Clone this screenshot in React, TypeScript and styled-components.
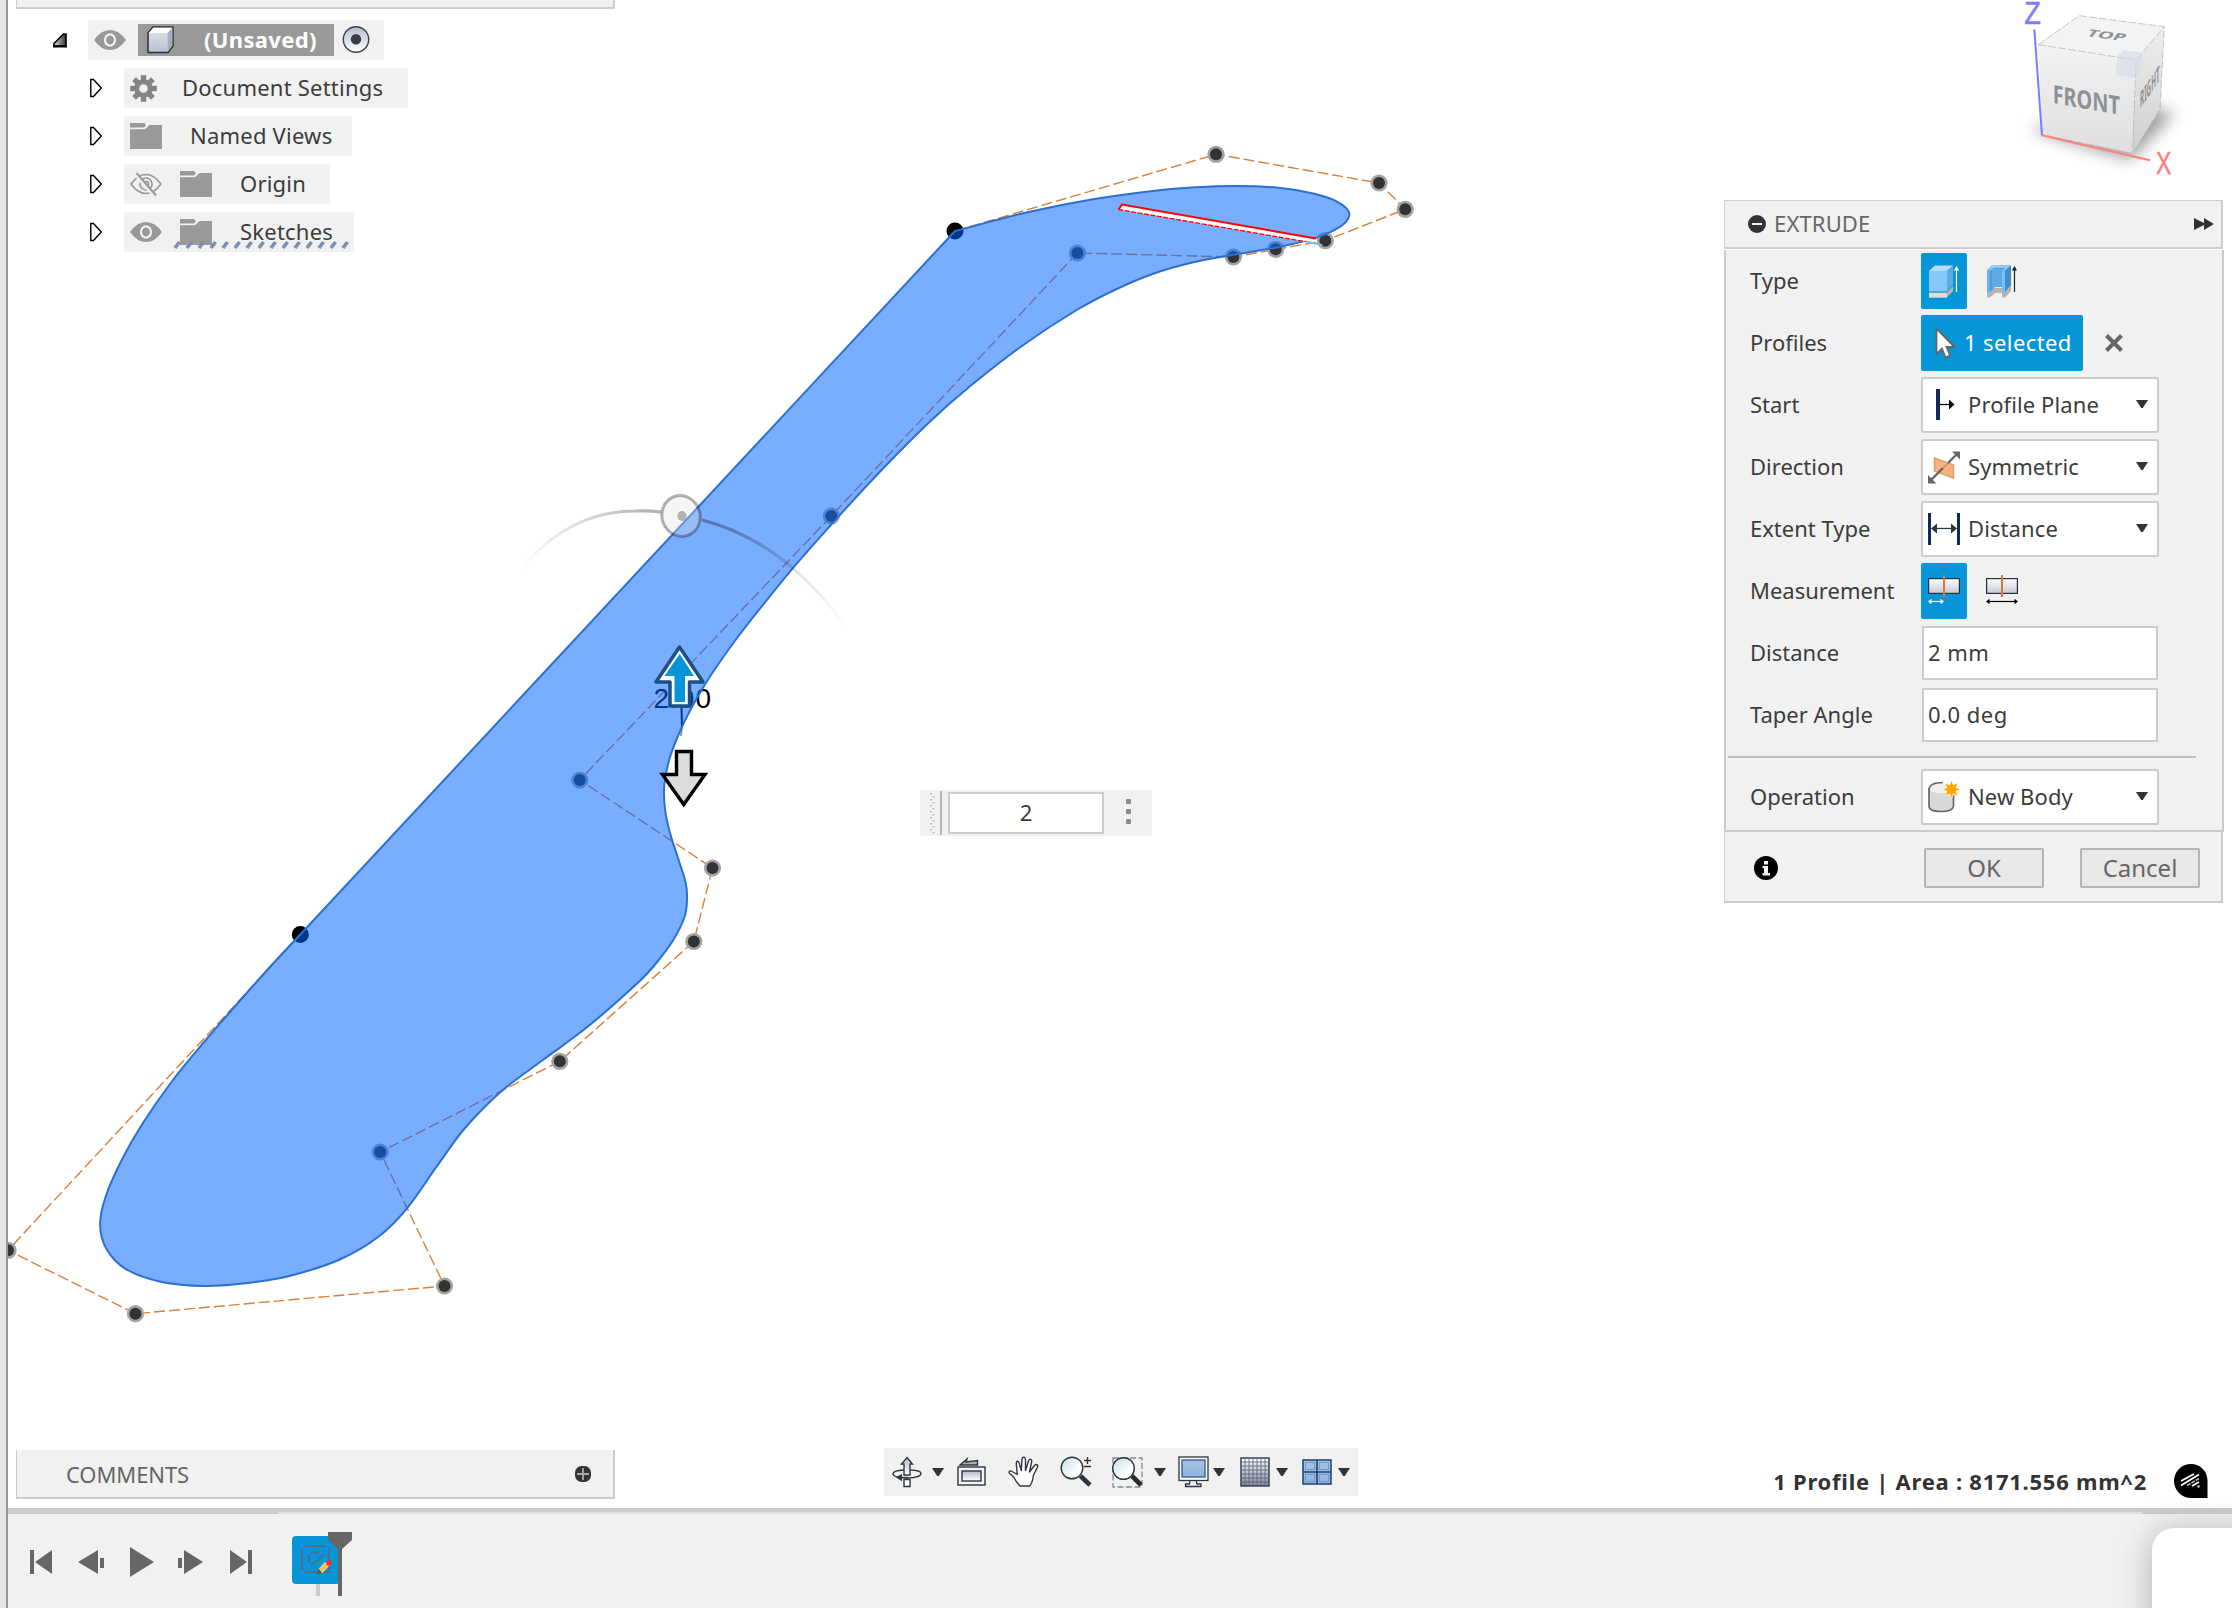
import React from 'react';
import styled, { createGlobalStyle } from 'styled-components';

const Global = createGlobalStyle`
  * { box-sizing: border-box; }
  body { margin: 0; background: #fff; font-family: "Noto Sans", "Open Sans", sans-serif; font-size: 22px; color: #3c3c3c; overflow: hidden; }
  svg { display: block; flex: none; }
`;

/* ---------- Shell ---------- */
const Shell = styled.div`
  display: flex;
  position: relative;
  width: 2232px;
  height: 1608px;
  overflow: hidden;
`;
const Gutter = styled.div`
  width: 8px;
  background: #e5e5e5;
  border-right: 2px solid #999;
`;
const Main = styled.div`
  flex: 1;
  display: flex;
  flex-direction: column;
  min-width: 0;
`;
const Viewport = styled.section`
  position: relative;
  height: 1508px;
  overflow: hidden;
  display: flex;
  flex-direction: column;
  justify-content: space-between;
`;
const Scene = styled.svg`
  position: absolute;
  left: -8px;
  top: 0;
`;
const Row = styled.div`
  position: relative;
  display: flex;
  justify-content: space-between;
  align-items: flex-start;
`;

/* ---------- Browser tree ---------- */
const Browser = styled.div`
  margin-left: 8px;
  width: 599px;
`;
const BrowserStrip = styled.div`
  height: 9px;
  background: #f1f1f1;
  border: solid #ccc;
  border-width: 0 2px 2px 1px;
`;
const Tree = styled.div`
  display: flex;
  flex-direction: column;
  gap: 8px;
  padding-top: 11px;
`;
const TreeRow = styled.div<{ $root?: boolean }>`
  display: flex;
  align-items: center;
  height: 40px;
  padding-left: ${p => (p.$root ? 37 : 74)}px;
  gap: ${p => (p.$root ? 21 : 22)}px;
`;
const TreeItem = styled.div<{ $w: number }>`
  position: relative;
  width: ${p => p.$w}px;
  height: 40px;
  display: flex;
  align-items: center;
  background: #f1f1f1;
  padding-left: 6px;
`;
const TreeName = styled.span<{ $gap: number }>`
  margin-left: ${p => p.$gap}px;
  padding-bottom: 2px;
  letter-spacing: 0.22px;
  white-space: nowrap;
`;
const RootLabel = styled.div`
  display: flex;
  align-items: center;
  width: 196px;
  height: 32px;
  margin: 0 8px 0 12px;
  padding-left: 9px;
  gap: 30px;
  background: #999;
  color: #fff;
  font-weight: 700;
`;
const RootName = styled.span`
  padding-bottom: 2px;
  letter-spacing: 0.35px;
`;
const Hatch = styled.svg`
  position: absolute;
  left: 49px;
  top: 28px;
`;
const Spaced = styled.span<{ $l: number; $t?: number }>`
  display: flex;
  margin-left: ${p => p.$l}px;
  padding-top: ${p => p.$t ?? 0}px;
`;

/* ---------- Right side ---------- */
const RightColumn = styled.div`
  display: flex;
  flex-direction: column;
  align-items: flex-end;
  margin-right: 8px;
`;
const CubeSlot = styled.div`
  height: 200px;
  margin-right: -8px;
`;
const Dialog = styled.div`
  width: 500px;
`;
const DialogHeader = styled.div`
  display: flex;
  align-items: center;
  width: 499px;
  height: 49px;
  margin-bottom: 1px;
  padding: 0 7px 0 23px;
  background: #f1f1f1;
  border: solid #ccc;
  border-width: 1px 2px 2px 1px;
  color: #666;
`;
const DialogTitle = styled.span`
  flex: 1;
  margin-left: 8px;
  padding-bottom: 2px;
  letter-spacing: 0.15px;
`;
const DialogBody = styled.div`
  height: 582px;
  padding-top: 3px;
  background: #f1f1f1;
  border: 2px solid #ccc;
  border-top: 0;
  display: flex;
  flex-direction: column;
  gap: 6px;
`;
const Field = styled.div`
  display: flex;
  align-items: center;
  height: 56px;
  padding-left: 24px;
`;
const FieldLabel = styled.label`
  width: 171px;
  padding-bottom: 2px;
`;
const IconToggle = styled.button<{ $on?: boolean }>`
  width: 46px;
  height: 56px;
  margin-right: 12px;
  padding: 0;
  border: 0;
  border-radius: 2px;
  display: flex;
  align-items: center;
  justify-content: center;
  background: ${p => (p.$on ? '#0696d7' : 'transparent')};
`;
const Selected = styled.button`
  display: flex;
  align-items: center;
  width: 162px;
  height: 56px;
  margin-right: 22px;
  padding: 0 0 0 14px;
  gap: 8px;
  border: 0;
  border-radius: 2px;
  background: #0696d7;
  color: #fff;
  font: inherit;
  letter-spacing: 0.4px;
  white-space: nowrap;
`;
const SelectedText = styled.span`
  padding-bottom: 2px;
`;
const Select = styled.div`
  display: flex;
  align-items: center;
  width: 238px;
  height: 56px;
  padding: 0 9px 0 5px;
  background: #fff;
  border: 2px solid #ccc;
  border-radius: 2px;
`;
const SelectText = styled.span`
  flex: 1;
  margin-left: 8px;
  padding-bottom: 2px;
  letter-spacing: 0.1px;
  white-space: nowrap;
`;
const TextField = styled.div`
  display: flex;
  align-items: center;
  width: 236px;
  height: 54px;
  margin-left: 1px;
  padding: 0 0 2px 4px;
  background: #fff;
  border: 2px solid #ccc;
  letter-spacing: 0.5px;
`;
const Divider = styled.hr`
  width: 468px;
  height: 2px;
  margin: 7px 0 5px 2px;
  border: 0;
  background: #bfbfbf;
`;
const DialogFooter = styled.div`
  display: flex;
  align-items: center;
  width: 499px;
  height: 71px;
  padding: 2px 21px 0 29px;
  background: #f1f1f1;
  border: solid #ccc;
  border-width: 0 2px 2px 1px;
`;
const PushButton = styled.button<{ $l: number }>`
  width: 120px;
  height: 40px;
  margin-left: ${p => p.$l}px;
  padding: 0;
  background: #e8e8e8;
  border: 2px solid #b5b5b5;
  border-radius: 2px;
  color: #666;
  font: inherit;
  font-size: 24px;
  line-height: 34px;
`;

/* ---------- Bottom row ---------- */
const BottomRow = styled.div`
  position: relative;
  display: flex;
  align-items: flex-start;
  height: 60px;
  padding-left: 8px;
`;
const Comments = styled.div`
  display: flex;
  align-items: center;
  justify-content: space-between;
  width: 599px;
  height: 49px;
  margin-top: 2px;
  padding: 0 22px 0 49px;
  background: #f1f1f1;
  border: solid #ccc;
  border-width: 0 2px 2px 1px;
  color: #666;
  letter-spacing: -0.1px;
`;
const NavBar = styled.nav`
  display: flex;
  align-items: center;
  width: 474px;
  height: 48px;
  margin-left: 269px;
  padding-left: 6px;
  background: #f1f1f1;
`;
const Status = styled.div`
  flex: 1;
  display: flex;
  align-items: center;
  justify-content: flex-end;
  gap: 27px;
  height: 66px;
  padding-right: 24px;
  color: #333;
  font-weight: 700;
  letter-spacing: 0.74px;
  white-space: nowrap;
`;

/* ---------- Timeline ---------- */
const SplitBar = styled.div`
  height: 6px;
  display: flex;
  align-items: flex-end;
  padding-left: 270px;
  background: #cbcbcb;
`;
const SplitGroove = styled.div`
  width: 1864px;
  height: 2px;
  background: #dfdfdf;
`;
const Timeline = styled.footer`
  display: flex;
  align-items: center;
  flex: 1;
  padding-top: 2px;
  padding-left: 22px;
  background: #f1f1f1;
`;
const PopupCorner = styled.div`
  position: absolute;
  left: 2152px;
  top: 1528px;
  width: 120px;
  height: 120px;
  border-radius: 22px;
  background: #fff;
  box-shadow: 0 4px 34px rgba(0, 0, 0, 0.28);
`;
const MiniInput = styled.div`
  position: absolute;
  left: 912px;
  top: 790px;
  display: flex;
  align-items: center;
  width: 232px;
  height: 46px;
  padding-left: 9px;
  background: #f1f1f1;
`;
const MiniField = styled.div`
  width: 156px;
  height: 42px;
  margin: 0 22px 0 6px;
  display: flex;
  align-items: center;
  justify-content: center;
  padding-bottom: 2px;
  background: #fff;
  border: 2px solid #ccc;
`;
const MoreDots = styled.div`
  display: flex;
  flex-direction: column;
  gap: 5px;
  padding-bottom: 3px;
`;
const MoreDot = styled.i`
  width: 5px;
  height: 5px;
  border-radius: 1px;
  background: #8c8c8c;
`;

/* ---------- Tree icons ---------- */
const Eye = () => (
  <svg width="32" height="22" viewBox="0 0 32 22">
    <path d="M0 11Q7 1 16 1T32 11Q25 21 16 21T0 11Z" fill="#999" />
    <ellipse cx="16" cy="11" rx="5" ry="5.6" fill="none" stroke="#f1f1f1" strokeWidth="2.2" />
  </svg>
);
const EyeOff = () => (
  <svg width="32" height="24" viewBox="0 0 32 24" fill="none" stroke="#999" strokeWidth="1.7">
    <path d="M1 12Q8 2.5 16 2.5T31 12Q24 21.500 16 21.500T1 12Z" />
    <circle cx="16" cy="12" r="6" />
    <circle cx="16" cy="12" r="2.500" />
    <path d="M4.500 1.500L24 24" stroke="#f1f1f1" strokeWidth="3" />
    <path d="M6.500 1L26 23.500" strokeWidth="2" />
  </svg>
);
const Folder = () => (
  <svg width="32" height="26" viewBox="0 0 32 26" fill="#999">
    <path d="M0 0H13Q15.500 0 15.500 2.200Q15.500 4.500 13 4.500H0Z" />
    <path d="M0 6.200H15L19.500 2H32V26H0Z" />
  </svg>
);
const Gear = () => (
  <svg width="27" height="27" viewBox="-13.500 -13.500 27 27" fill="#858585">
    {[0, 45, 90, 135, 180, 225, 270, 315].map(a => (
      <rect key={a} x="-2.700" y="-13.300" width="5.400" height="7" transform={`rotate(${a})`} />
    ))}
    <circle r="6.800" fill="none" stroke="#858585" strokeWidth="5" />
  </svg>
);
const Expand = () => (
  <svg width="12" height="20" viewBox="0 0 12 20">
    <path d="M.8 1.500H3.500L11.300 10L3.500 18.500H.8Z" fill="#fff" stroke="#000" strokeWidth="1.400" />
  </svg>
);
const RootExpand = () => (
  <svg width="14" height="15" viewBox="0 0 14 15">
    <defs><linearGradient id="re" x1="0" x2="1"><stop offset="0" stopColor="#ddd" /><stop offset="1" stopColor="#333" /></linearGradient></defs>
    <path d="M13 1V13H1V10.500L10.500 1Z" fill="url(#re)" stroke="#000" strokeWidth="1.600" />
    <path d="M0 13.500H14" stroke="#000" strokeWidth="2" />
  </svg>
);
const BodyCube = () => (
  <svg width="27" height="28" viewBox="0 0 27 28">
    <defs><linearGradient id="bc" x1="0" x2="0" y1="0" y2="1"><stop offset="0" stopColor="#e2e6ee" /><stop offset="1" stopColor="#b9c0d0" /></linearGradient></defs>
    <path d="M1 7L6 1H26V20L21 26.500H1Z" fill="url(#bc)" stroke="#2c3038" strokeWidth="1.500" strokeLinejoin="round" />
    <path d="M1.800 7L6.300 1.800H25.300L20.500 7Z" fill="#fff" />
    <path d="M20.500 7L25.300 1.800V19.600L20.800 25.700Z" fill="#a6aebf" />
  </svg>
);
const Radio = () => (
  <svg width="28" height="28" viewBox="0 0 28 28">
    <defs><linearGradient id="rd" x1="0" x2="0" y1="0" y2="1"><stop offset="0" stopColor="#b3bccf" /><stop offset="1" stopColor="#fff" /></linearGradient></defs>
    <circle cx="14" cy="13.500" r="12.700" fill="url(#rd)" stroke="#3c3f46" strokeWidth="1.400" />
    <circle cx="14" cy="13.300" r="5.200" fill="#3a3c42" />
  </svg>
);

/* ---------- Dialog icons ---------- */
const Minus = () => (
  <svg width="18" height="18" viewBox="0 0 18 18"><circle cx="9" cy="9" r="9" fill="#333" /><path d="M4 9H14" stroke="#f1f1f1" strokeWidth="2" /></svg>
);
const Forward = () => (
  <svg width="20" height="12" viewBox="0 0 20 12" fill="#333"><path d="M0 0L10 5V0L20 6L10 12V7L0 12Z" /></svg>
);
const ExtrudeSolid = () => (
  <svg width="30" height="33" viewBox="0 0 30 33">
    <path d="M0 27.500H18L24 21V26L18 32.500H0Z" fill="#b5b5b5" /><path d="M0 28H18V32.500H0Z" fill="#dcdcdc" />
    <path d="M0 6H18V26.500H0Z" fill="#84c7fa" /><path d="M0 6L6 .5H24L18 6Z" fill="#b3deff" /><path d="M18 6L24 .5V20L18 26.500Z" fill="#5fa9e2" />
    <path d="M27.500 27V4" stroke="#fff" strokeWidth="1.200" /><path d="M24.800 5.500L27.500 1L30 5.500Z" fill="#fff" />
  </svg>
);
const ExtrudeThin = () => (
  <svg width="30" height="33" viewBox="0 0 30 33">
    <path d="M0 27L5 23H19L24 19V26L18 32.500H15V28H8L3 32.500H0Z" fill="#b4b4b4" />
    <path d="M0 5L5 .5H24L18 6H15V26.500H18L24 20V.5L18 6V26.500L15 27V22H8L3 27H0Z" fill="#4e9bd8" />
    <path d="M5 4H20L15 8V22H8L5 25Z" fill="#5eaae4" /><path d="M0 5H3V27H0Z" fill="#67b2ec" /><path d="M15 6H18V27H15Z" fill="#79bff5" />
    <path d="M18 6L24 .5V20L18 26.500Z" fill="#3f8dcb" /><path d="M0 5L5 1H23L18 5.500H15L18 3H7L3 5.500Z" fill="#8fcaf6" />
    <path d="M27.500 27V4" stroke="#222" strokeWidth="1.200" /><path d="M24.800 5.500L27.500 1L30 5.500Z" fill="#222" />
  </svg>
);
const Pointer = () => (
  <svg width="21" height="32" viewBox="0 0 21 32">
    <path d="M1.500 1.500V27L7 21.500L10.500 30.500L15 28.500L11.500 20H19.500Z" fill="#fff" stroke="#666" strokeWidth="1.800" />
  </svg>
);
const Clear = () => (
  <svg width="18" height="18" viewBox="0 0 18 18"><path d="M1.500 1.500L16.500 16.500M16.500 1.500L1.500 16.500" stroke="#666" strokeWidth="4" /></svg>
);
const Caret = ({ w = 12, h = 8 }: { w?: number; h?: number }) => (
  <svg width={w} height={h} viewBox="0 0 12 8"><path d="M0 0H12L6.800 8H5.200Z" fill="#333" /></svg>
);
const SelectCaret = styled.span`
  display: flex;
  padding-bottom: 2px;
`;
const StartPlane = () => (
  <svg width="32" height="32" viewBox="0 0 32 32"><path d="M10 0V31" stroke="#12295c" strokeWidth="4" /><path d="M12 15.500H22" stroke="#000" strokeWidth="1.200" /><path d="M21 10.500L26.500 15.500L21 20.500Z" fill="#000" /></svg>
);
const SymmetricIcon = () => (
  <svg width="32" height="33" viewBox="0 0 32 33">
    <path d="M6.500 7L25.500 14V27L6.500 20Z" fill="#f6b27f" stroke="#e29d6a" strokeWidth="1.600" />
    <path d="M3 29L15 17" stroke="#666" strokeWidth="2.400" /><path d="M15 17L20 12" stroke="#d49b78" strokeWidth="2.400" /><path d="M20 12L29 3" stroke="#666" strokeWidth="2.400" />
    <path d="M24 .5H32V8.500ZM0 24V32.500H8.500Z" fill="#666" />
  </svg>
);
const ExtentIcon = () => (
  <svg width="32" height="32" viewBox="0 0 32 32"><path d="M1.500 0V32M30.500 0V32" stroke="#12295c" strokeWidth="3" /><path d="M6 15.500H26" stroke="#2b3440" strokeWidth="1.300" /><path d="M3 15.500L9 10.500V20.500ZM29 15.500L23 10.500V20.500Z" fill="#2b3440" /></svg>
);
const MeasureIcon = ({ whole }: { whole?: boolean }) => {
  const c = whole ? '#000' : '#fff';
  const e = whole ? 32 : 16;
  return (
    <svg width="32" height="32" viewBox="0 0 32 32">
      <defs><linearGradient id="mg" x1="0" x2="0" y1="0" y2="1"><stop offset="0" stopColor="#fff" /><stop offset="1" stopColor="#c5c9d2" /></linearGradient></defs>
      <rect x=".6" y="3.600" width="30.800" height="14.800" fill="url(#mg)" stroke="#2b3040" strokeWidth="1.200" />
      <path d="M16 0V22" stroke="#e2733a" strokeWidth="2" />
      <path d={`M2 26.500H${e - 2}`} stroke={c} strokeWidth="1.200" />
      <path d={`M0 26.500L3.500 23.800V29.200ZM${e} 26.500L${e - 3.5} 23.800V29.200Z`} fill={c} />
    </svg>
  );
};
const NewBody = () => (
  <svg width="32" height="32" viewBox="0 0 32 32">
    <path d="M1 7V25Q1 30.500 13 30.500T25.500 25V7" fill="#d8d8d8" stroke="#666" strokeWidth="1.700" />
    <ellipse cx="13" cy="7" rx="12" ry="5.200" fill="#f0f0f0" /><path d="M1 9Q1 1.500 15 1.500" fill="none" stroke="#666" strokeWidth="1.700" />
    <path d="M23.500 -1L25.600 3L30 1.600L28.700 6L33 8.500L28.700 10.600L30 15.500L25.600 13.800L23.500 18L21.200 13.800L17 15.500L18.300 10.600L13 8.500L18.300 6L17 1.600L21.200 3Z" fill="#fff" />
    <path d="M23.500 0L25 4.300L29.500 2.500L27.600 6.800L32 8.500L27.600 10L29.500 14.500L25 12.600L23.500 17L22 12.600L17.500 14.500L19.300 10L15 8.500L19.300 6.800L17.500 2.500L22 4.300Z" fill="#ffa800" />
  </svg>
);
const Info = () => (
  <svg width="24" height="24" viewBox="0 0 24 24"><circle cx="12" cy="12" r="12" fill="#000" /><path d="M10 5H14V8.500H10ZM8.500 10H14V17H16V19.500H8.500V17H10V12H8.500Z" fill="#f1f1f1" /></svg>
);

/* ---------- Navigation icons ---------- */
const NavDefs = () => (
  <svg width="0" height="0">
    <defs>
      <linearGradient id="silver" x1="0" x2="0" y1="0" y2="1"><stop offset="0" stopColor="#b5bac4" /><stop offset="1" stopColor="#fff" /></linearGradient>
      <linearGradient id="glass" x1="0" x2="1" y1="0" y2="1"><stop offset="0" stopColor="#c3dedd" /><stop offset=".6" stopColor="#f6fbfb" /><stop offset="1" stopColor="#fff" /></linearGradient>
      <linearGradient id="gridg" x1="0" x2="0" y1="0" y2="1"><stop offset="0" stopColor="#fff" /><stop offset="1" stopColor="#7c86a5" /></linearGradient>
      <linearGradient id="pane" x1="0" x2="0" y1="0" y2="1"><stop offset="0" stopColor="#a8c4e2" /><stop offset="1" stopColor="#8fb2dd" /></linearGradient>
    </defs>
  </svg>
);
const ink = '#2f3542';
const Orbit = () => (
  <svg width="30" height="32" viewBox="0 0 30 32" fill="none" stroke={ink} strokeWidth="1.400">
    <path d="M12 14Q1 14.500 1 18T15 22Q29 21.500 29 17.500Q29 14.500 18.500 14" />
    <path d="M15 1.500L20.500 8H18V19H12V8H9.500Z" fill="url(#silver)" /><path d="M12 23.500H18V30.500H12Z" fill="#fff" />
    <path d="M10 17.800V25.200L4 21.500Z" fill={ink} stroke="none" /><path d="M9 21.500H16" />
  </svg>
);
const LookAt = () => (
  <svg width="29" height="32" viewBox="0 0 29 32" stroke={ink} strokeWidth="1.400">
    <path d="M3 9L10 3L9 6L20.500 4.500V9Z" fill="#a9aeb8" />
    <rect x="1" y="11" width="27" height="18" fill="#f4f5f7" /><rect x="5" y="15" width="19" height="10" fill="url(#silver)" />
  </svg>
);
const Hand = () => (
  <svg width="31" height="32" viewBox="0 0 31 32">
    <path d="M12 30Q7.500 25 6 21.500L1.300 17Q.5 14.800 3 15L9.300 18.500L8.300 8Q8.200 5 9.800 5.200Q11 5.300 11.400 8L13.300 14.500L14 3Q14.500 1 16.200 1.300Q17.400 1.500 17.500 4V14.500L20.700 4.500Q21.500 2.800 23 3.500Q24.200 4.200 23.500 6.500L21.500 16L26.500 9.500Q28 8 29.200 8.800Q30.200 9.800 29 12L25.500 19Q24.500 27 21.500 30Z" fill="#fff" stroke={ink} strokeWidth="1.400" strokeLinejoin="round" />
  </svg>
);
const ZoomIcon = () => (
  <svg width="32" height="32" viewBox="0 0 32 32">
    <path d="M20.500 20L30 29" stroke={ink} strokeWidth="4.600" /><circle cx="12" cy="12" r="10.800" fill="url(#glass)" stroke={ink} strokeWidth="1.400" />
    <path d="M24 4.500H31M27.500 1V8M24 10.500H31" stroke="#333" strokeWidth="1.400" />
  </svg>
);
const ZoomWindow = () => (
  <svg width="32" height="32" viewBox="0 0 32 32">
    <rect x="1" y="2" width="29" height="29" fill="none" stroke="#888" strokeWidth="1.300" strokeDasharray="6 2.500" />
    <path d="M20 20L29 29" stroke="#2a2a2a" strokeWidth="4.600" /><circle cx="11.500" cy="12.500" r="10.800" fill="url(#glass)" stroke={ink} strokeWidth="1.400" />
  </svg>
);
const Monitor = () => (
  <svg width="31" height="32" viewBox="0 0 31 32" stroke={ink} strokeWidth="1.300">
    <path d="M12 24H18L19 28H23V30.500H7.500V28H11.500Z" fill="#eee" /><rect x="1" y="1" width="29" height="23.500" fill="#fafafa" /><rect x="4" y="4" width="23" height="17" fill="url(#pane)" stroke="#2b5b96" />
  </svg>
);
const GridIcon = () => (
  <svg width="30" height="32" viewBox="0 0 30 32">
    <rect x="1" y="2" width="28" height="28" fill="url(#gridg)" stroke={ink} strokeWidth="1.400" />
    <path d="M5 2V30M9 2V30M13 2V30M17 2V30M21 2V30M25 2V30M1 6H29M1 10H29M1 14H29M1 18H29M1 22H29M1 26H29" stroke="#59606f" strokeWidth=".8" />
  </svg>
);
const Panes = () => (
  <svg width="30" height="32" viewBox="0 0 30 32">
    <rect x="1" y="4" width="28" height="24" fill="url(#pane)" stroke="#1d3f70" strokeWidth="1.500" />
    <path d="M15 4V28M1 16H29" stroke="#1d3f70" strokeWidth="1.600" />
    <g fill="none" stroke="#6f9acb"><rect x="3.500" y="6.500" width="9" height="7" /><rect x="17.500" y="6.500" width="9" height="7" /><rect x="3.500" y="18.500" width="9" height="7" /><rect x="17.500" y="18.500" width="9" height="7" /></g>
  </svg>
);
const PlusBadge = () => (
  <svg width="16" height="16" viewBox="0 0 16 16"><rect width="16" height="16" rx="6.500" fill="#333" /><path d="M8 2V14M2 8H14" stroke="#aaa" strokeWidth="1.800" /></svg>
);
const Assistant = () => (
  <svg width="34" height="34" viewBox="0 0 34 34">
    <path d="M17 0A16.500 16.500 0 0 1 33.500 17V34H17A17 17 0 0 1 17 0Z" fill="#000" />
    <path d="M7 17L20 10M7 21.500L25 10.500M18 22L25 18" stroke="#fff" strokeWidth="1.900" /><path d="M13 21.500L25 14.500" stroke="#aaa" strokeWidth="1.900" strokeDasharray="4 1" /><path d="M23.500 22.500h2" stroke="#fff" strokeWidth="2" />
  </svg>
);

/* ---------- Transport ---------- */
const Transport = ({ d, w, l }: { d: string; w: number; l: number }) => (
  <Spaced $l={l}><svg width={w} height="32" viewBox={`0 0 ${w} 32`} fill="#666"><path d={d} /></svg></Spaced>
);
const SketchFeature = () => (
  <svg width="62" height="68" viewBox="0 0 62 68">
    <rect y="5" width="48" height="48" rx="4" fill="#0696d7" />
    <g fill="none" stroke="#4c6f88" strokeWidth="1.800"><path d="M10 15H37V41H10Z" /><path d="M17 21.500H30V24Q26 32 17 34Z" /></g>
    <g fill="#1a8cff"><circle cx="10" cy="15" r="2" /><circle cx="36" cy="15" r="2" /><circle cx="10" cy="41" r="2" /><circle cx="17" cy="21.500" r="2" /><circle cx="29" cy="21.500" r="2" /><circle cx="17" cy="34" r="2" /></g>
    <path d="M27 38L33 31.500L37 34.500L30 42Z" fill="#ffc04d" stroke="#ffdc95" strokeWidth=".8" /><path d="M27 38L30 42L24.500 43.500Z" fill="#555" /><circle cx="37" cy="32" r="2.800" fill="#ee2f2f" />
    <rect x="24" y="53" width="4" height="12" fill="#ccc" />
    <path d="M36 1H60V9L50 18V65H46V18L36 9Z" fill="#666" />
  </svg>
);

/* ---------- View cube ---------- */
const ViewCube = () => (
  <svg width="242" height="190" viewBox="0 0 726 570">
    <defs>
      <filter id="soft" x="-50%" y="-50%" width="200%" height="200%"><feGaussianBlur stdDeviation="24" /></filter>
      <linearGradient id="front" x1="0" x2="0" y1="0" y2="1"><stop offset="0" stopColor="#f3f3f3" /><stop offset="1" stopColor="#dedede" /></linearGradient>
      <linearGradient id="side" x1="0" x2="0" y1="0" y2="1"><stop offset="0" stopColor="#ededed" /><stop offset="1" stopColor="#d0d0d0" /></linearGradient>
    </defs>
    <path d="M120 390L420 480L555 340L400 300Z" fill="#000" opacity=".38" filter="url(#soft)" />
    <path d="M145 134L438 180L428 460L156 404Z" fill="url(#front)" />
    <path d="M268 47L523 80L438 180L145 134Z" fill="#f3f3f3" />
    <path d="M523 80L510 328L428 460L438 180Z" fill="url(#side)" />
    <path d="M145 134L268 47L523 80L510 328L428 460L156 404M145 134L438 180L523 80M438 180L428 460" fill="none" stroke="#b4b4b4" strokeWidth="2.200" strokeDasharray="24 6" />
    <path d="M380 170L400 150L456 158L454 205L436 234L378 226Z" fill="#d5d9e4" opacity=".6" />
    <g fill="#8d9196" fontFamily="Noto Sans, sans-serif" fontWeight="700">
      <text transform="matrix(.97 .17 0 1 188 309)" fontSize="76" textLength="208" lengthAdjust="spacingAndGlyphs">FRONT</text>
      <text transform="matrix(.98 .13 -.55 .75 286 108)" fontSize="38" textLength="116" lengthAdjust="spacingAndGlyphs">TOP</text>
      <text transform="matrix(.5 -.72 0 1 450 326)" fontSize="66" textLength="118" lengthAdjust="spacingAndGlyphs">RIGHT</text>
    </g>
    <path d="M133 88L156 406" stroke="#7d7dff" strokeWidth="6" />
    <path d="M156 406L480 481" stroke="#ff7f7f" strokeWidth="6" />
    <g fontFamily="Liberation Sans, sans-serif" fontSize="92"><text x="103" y="73" fill="#7d7dff" stroke="#7d7dff" strokeWidth="1.500" textLength="50" lengthAdjust="spacingAndGlyphs">Z</text><text x="498" y="523" fill="#ff7f7f" stroke="#ff7f7f" strokeWidth="1.500" textLength="46" lengthAdjust="spacingAndGlyphs">X</text></g>
  </svg>
);

/* ---------- Sketch scene ---------- */
type Pt = [number, number];
const control: Pt[] = [
  [955, 231], [1216, 154.300], [1379, 183], [1405.200, 209.300], [1325.300, 240.700], [1275.700, 249.300], [1233.400, 257], [1077.400, 253],
  [831.300, 516], [579.800, 780], [712.500, 868], [693.800, 941.500], [559.800, 1061.300], [380.200, 1152], [444.500, 1286], [135.500, 1313.700],
  [8, 1250.300], [300.300, 934.500],
];
const outline: Pt[] = [
  [955, 231], [1027.400, 212.300], [1092.900, 199.300], [1154.800, 190.700], [1196, 187.300], [1235.800, 186], [1278.800, 187.700], [1313.300, 193.500],
  [1337.400, 201.800], [1349.300, 213], [1344.300, 223.500], [1327, 233.600], [1306.400, 240.600], [1275.400, 247.700], [1233.400, 254.700],
  [1193.300, 262.300], [1153.300, 273.700], [1116.700, 289], [1076.700, 310], [1023.300, 345], [970, 386.300], [930, 421.500], [881.600, 470],
  [836, 519.300], [792.700, 568.300], [760.200, 608.300], [736.300, 639], [711, 675], [695, 701.500], [681.500, 728], [670, 757], [664.300, 785],
  [665, 809], [670, 833], [678.300, 859], [685.700, 883], [687, 900], [684.500, 917], [673.300, 940], [656.700, 962.500], [640, 980.700],
  [588.500, 1026], [541.800, 1060.800], [500.500, 1092], [463.800, 1129.500], [436.200, 1167.200], [407, 1208.300], [378.800, 1236.500],
  [339.800, 1259.500], [289.300, 1276], [248, 1283], [204.300, 1286], [160.700, 1281.700], [125.500, 1268.800], [106.500, 1249],
  [100.100, 1225], [105.600, 1196.700], [121.700, 1160], [142.300, 1124], [172.200, 1081], [204.300, 1041.700], [238.800, 1002], [268.600, 968.500], [300.300, 934.500],
];
const smooth = (p: Pt[]) => {
  let d = `M${p[0][0]} ${p[0][1]}`;
  for (let i = 0; i < p.length - 1; i++) {
    const a = p[i - 1] ?? p[i], b = p[i], c = p[i + 1], e = p[i + 2] ?? c;
    const len = Math.hypot(c[0] - b[0], c[1] - b[1]);
    const t1 = len / (Math.hypot(b[0] - a[0], b[1] - a[1]) + len);
    const t2 = len / (Math.hypot(e[0] - c[0], e[1] - c[1]) + len);
    d += `C${b[0] + ((c[0] - a[0]) * t1) / 3} ${b[1] + ((c[1] - a[1]) * t1) / 3} ${c[0] - ((e[0] - b[0]) * t2) / 3} ${c[1] - ((e[1] - b[1]) * t2) / 3} ${c[0]} ${c[1]}`;
  }
  return d + 'Z';
};
const profile = smooth(outline);

const SketchScene = () => (
  <Scene width="2232" height="1508" viewBox="0 0 2232 1508">
    <defs>
      <linearGradient id="fade" gradientUnits="userSpaceOnUse" x1="519" x2="850" y1="0" y2="0">
        <stop offset="0" stopColor="#000" stopOpacity="0" /><stop offset=".4" stopColor="#000" stopOpacity=".3" />
        <stop offset=".62" stopColor="#000" stopOpacity=".3" /><stop offset=".85" stopColor="#000" stopOpacity=".1" /><stop offset="1" stopColor="#000" stopOpacity="0" />
      </linearGradient>
    </defs>
    <polyline points={control.map(p => p.join()).join(' ')} fill="none" stroke="#dd7f3c" strokeWidth="1.400" strokeDasharray="11 4" />
    {control.map(([x, y], i) =>
      i === 0 || i === control.length - 1 ? (
        <circle key={i} cx={x} cy={y} r="8.500" fill="#000" />
      ) : (
        <g key={i}><circle cx={x} cy={y} r="8.600" fill="#a3a3a3" /><circle cx={x} cy={y} r="6" fill="#333" /></g>
      ),
    )}
    <text x="653.500" y="707.500" fontFamily="Liberation Sans, sans-serif" fontSize="28" fill="#000" letterSpacing="1">2.00</text>
    <path d="M681.500 706L682 728" stroke="#000" strokeWidth="2" /><path d="M682 726L681 736" stroke="#999" strokeWidth="2" />
    <path d={profile} fill="#0064ff" fillOpacity=".53" stroke="#2b6fd0" strokeWidth="2" />
    <path d="M519 572C550 532 590 511 635 511Q648 510.500 661 512M702 520C758 534 805 570 847 628" fill="none" stroke="url(#fade)" strokeWidth="3" />
    <ellipse cx="681" cy="516" rx="19" ry="20.500" transform="rotate(-20 681 516)" fill="#e1e1e1" fillOpacity=".32" stroke="#000" strokeOpacity=".3" strokeWidth="3" />
    <ellipse cx="682" cy="516" rx="4.500" ry="5" fill="#000" fillOpacity=".28" />
    <path d="M1122 204.500L1316 238.500L1307 242L1118.500 209.500Z" fill="#fff" />
    <path d="M1306 241.500L1322 245" stroke="#6fc4e4" strokeWidth="1.800" />
    <path d="M1118.500 209.500L1122 204.500L1316 238.500" fill="none" stroke="#f00" strokeWidth="2" />
    <path d="M1118.500 209.500L1306 241.700" stroke="#f00" strokeWidth="1.300" strokeDasharray="5 1.500" />
    <path d="M679.500 647L703 682H689.500V706H670V682H656Z" fill="#fff" stroke="#1d4f82" strokeWidth="3.500" strokeLinejoin="round" />
    <path d="M679.700 654L694 676H685V702H674.500V676H664.500Z" fill="#0696d7" />
    <path d="M676.500 751.500H691.500V774.500H705L683.700 804.500L662.500 774.500H676.500Z" fill="#dcdcdc" stroke="#000" strokeWidth="3.400" />
  </Scene>
);

const grip: Pt[] = Array.from({ length: 14 }, (_, i) => [i % 2 ? 3.500 : 1, 2 + i * 3] as Pt);

export default function App() {
  return (
    <>
      <Global />
      <Shell>
        <Gutter />
        <Main>
          <Viewport>
            <SketchScene />
            <Row>
              <Browser>
                <BrowserStrip />
                <Tree>
                  <TreeRow $root>
                    <RootExpand />
                    <TreeItem $w={296}>
                      <Eye />
                      <RootLabel><BodyCube /><RootName>(Unsaved)</RootName></RootLabel>
                      <Radio />
                    </TreeItem>
                  </TreeRow>
                  <TreeRow><Expand /><TreeItem $w={284}><Gear /><TreeName $gap={25}>Document Settings</TreeName></TreeItem></TreeRow>
                  <TreeRow><Expand /><TreeItem $w={228}><Folder /><TreeName $gap={28}>Named Views</TreeName></TreeItem></TreeRow>
                  <TreeRow><Expand /><TreeItem $w={206}><EyeOff /><Spaced $l={18}><Folder /></Spaced><TreeName $gap={28}>Origin</TreeName></TreeItem></TreeRow>
                  <TreeRow>
                    <Expand />
                    <TreeItem $w={230}>
                      <Eye /><Spaced $l={18}><Folder /></Spaced><TreeName $gap={28}>Sketches</TreeName>
                      <Hatch width="180" height="10" viewBox="0 0 180 10">
                        {Array.from({ length: 15 }, (_, i) => <path key={i} d={`M${2 + i * 12} 8L${6.500 + i * 12} 2`} stroke="#7a90b4" strokeWidth="3.600" />)}
                      </Hatch>
                    </TreeItem>
                  </TreeRow>
                </Tree>
              </Browser>
              <RightColumn>
                <CubeSlot><ViewCube /></CubeSlot>
                <Dialog>
                  <DialogHeader><Minus /><DialogTitle>EXTRUDE</DialogTitle><Forward /></DialogHeader>
                  <DialogBody>
                    <Field><FieldLabel>Type</FieldLabel><IconToggle $on><ExtrudeSolid /></IconToggle><IconToggle><ExtrudeThin /></IconToggle></Field>
                    <Field><FieldLabel>Profiles</FieldLabel><Selected><Pointer /><SelectedText>1 selected</SelectedText></Selected><Clear /></Field>
                    <Field><FieldLabel>Start</FieldLabel><Select><StartPlane /><SelectText>Profile Plane</SelectText><SelectCaret><Caret /></SelectCaret></Select></Field>
                    <Field><FieldLabel>Direction</FieldLabel><Select><SymmetricIcon /><SelectText>Symmetric</SelectText><SelectCaret><Caret /></SelectCaret></Select></Field>
                    <Field><FieldLabel>Extent Type</FieldLabel><Select><ExtentIcon /><SelectText>Distance</SelectText><SelectCaret><Caret /></SelectCaret></Select></Field>
                    <Field><FieldLabel>Measurement</FieldLabel><IconToggle $on><MeasureIcon /></IconToggle><IconToggle><MeasureIcon whole /></IconToggle></Field>
                    <Field><FieldLabel>Distance</FieldLabel><TextField>2 mm</TextField></Field>
                    <Field><FieldLabel>Taper Angle</FieldLabel><TextField>0.0 deg</TextField></Field>
                    <Divider />
                    <Field><FieldLabel>Operation</FieldLabel><Select><NewBody /><SelectText>New Body</SelectText><SelectCaret><Caret /></SelectCaret></Select></Field>
                  </DialogBody>
                  <DialogFooter><Info /><PushButton $l={146}>OK</PushButton><PushButton $l={36}>Cancel</PushButton></DialogFooter>
                </Dialog>
              </RightColumn>
            </Row>
            <MiniInput>
              <svg width="13" height="44" viewBox="0 0 13 44">{grip.map(([x, y]) => <rect key={y} x={x} y={y} width="2" height="1.500" fill="#bbb" />)}<path d="M12 0V44" stroke="#b8b8b8" strokeWidth="2" /></svg>
              <MiniField>2</MiniField>
              <MoreDots><MoreDot /><MoreDot /><MoreDot /></MoreDots>
            </MiniInput>
            <BottomRow>
              <Comments>COMMENTS<PlusBadge /></Comments>
              <NavBar>
                <NavDefs />
                <Spaced $l={2}><Orbit /></Spaced>
                <Spaced $l={10}><Caret /></Spaced>
                <Spaced $l={13}><LookAt /></Spaced>
                <Spaced $l={22}><Hand /></Spaced>
                <Spaced $l={21}><ZoomIcon /></Spaced>
                <Spaced $l={20}><ZoomWindow /></Spaced>
                <Spaced $l={10}><Caret /></Spaced>
                <Spaced $l={12}><Monitor /></Spaced>
                <Spaced $l={4}><Caret /></Spaced>
                <Spaced $l={15}><GridIcon /></Spaced>
                <Spaced $l={6}><Caret /></Spaced>
                <Spaced $l={14}><Panes /></Spaced>
                <Spaced $l={6}><Caret /></Spaced>
              </NavBar>
              <Status>1 Profile | Area : 8171.556 mm^2<Assistant /></Status>
            </BottomRow>
          </Viewport>
          <SplitBar><SplitGroove /></SplitBar>
          <Timeline>
            <Transport l={0} w={22} d="M0 4H4V28H0ZM22 4V28L5 16Z" />
            <Transport l={26} w={26} d="M20 4V28L0 16ZM22 12H26V22H22Z" />
            <Transport l={26} w={24} d="M0 1L24 16L0 31Z" />
            <Transport l={24} w={25} d="M6 4L25 16L6 28ZM0 12H4V22H0Z" />
            <Transport l={27} w={22} d="M18 4H22V28H18ZM0 4V28L17 16Z" />
            <Spaced $l={40} $t={6}><SketchFeature /></Spaced>
          </Timeline>
        </Main>
        <PopupCorner />
      </Shell>
    </>
  );
}
